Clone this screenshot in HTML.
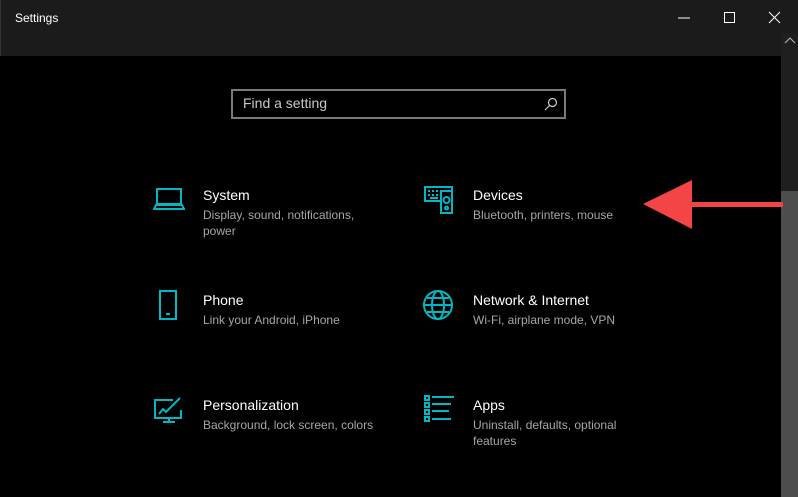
<!DOCTYPE html>
<html><head><style>
*{margin:0;padding:0;box-sizing:border-box}
body{width:798px;height:497px;background:#000;font-family:"Segoe UI","Liberation Sans",sans-serif;overflow:hidden;position:relative;color:#fff}
.tb{position:absolute;left:0;top:0;width:798px;height:56px;background:#1b1b1b;border-left:1px solid #333}
.tt{position:absolute;left:14px;top:11px;font-size:12px;color:#fff}
.sb{position:absolute;left:781px;top:33px;width:17px;height:464px;background:#1f1f1f}
.th{position:absolute;left:781px;top:191px;width:17px;height:306px;background:#4d4d4d}
.search{position:absolute;left:231px;top:89px;width:335px;height:30px;border:2px solid #7a7a7a}
.search span{position:absolute;left:10px;top:4px;font-size:14px;color:#c8c8c8}
.it{position:absolute}
.it .t{font-size:14px;color:#fff}
.it .s{font-size:12px;color:#a6a6a6;line-height:16px;margin-top:4px;width:190px}
svg.i{position:absolute}
</style></head><body>
<div class="tb"><div class="tt">Settings</div>
<svg style="position:absolute;left:670px;top:8px" width="120" height="20" stroke="#fff" stroke-width="1" fill="none">
<path d="M7 10h12"/><rect x="53.5" y="4.5" width="10" height="10"/><path d="M98 4l11 11M109 4L98 15"/></svg>
</div>
<div class="sb"></div><div class="th"></div>
<svg style="position:absolute;left:784px;top:37px" width="12" height="8" stroke="#bbb" fill="none"><path d="M1 6l5-5 5 5"/></svg>
<div class="search"><span>Find a setting</span>
<svg style="position:absolute;right:6px;top:6px" width="14" height="14" stroke="#ccc" fill="none" stroke-width="1.2"><circle cx="8.5" cy="5.5" r="4"/><path d="M5.5 8.5L1 13"/></svg></div>

<svg class="i" style="left:153px;top:186px" width="32" height="28" stroke="#00b7c3" stroke-width="2" fill="none"><rect x="4" y="3" width="24" height="15"/><path d="M1 23h30l-2-4H3z"/></svg>
<div class="it" style="left:203px;top:187px"><div class="t">System</div><div class="s" style="width:165px">Display, sound, notifications, power</div></div>

<svg class="i" style="left:423px;top:184px" width="32" height="32" stroke="#00b7c3" stroke-width="2" fill="none"><path d="M17 17H2V3h27v3"/><path d="M5 7h2M9 7h2M13 7h2M17 7h2M5 11h2M9 11h2M13 11h2M7 14h8" stroke-width="2"/><rect x="18" y="7" width="11" height="22"/><circle cx="23.5" cy="16" r="3"/><circle cx="23.5" cy="24" r="1.5"/></svg>
<div class="it" style="left:473px;top:187px"><div class="t">Devices</div><div class="s">Bluetooth, printers, mouse</div></div>

<svg class="i" style="left:158px;top:290px" width="22" height="32" stroke="#00b7c3" stroke-width="2" fill="none"><rect x="2" y="1" width="16" height="28"/><path d="M8 24h4"/></svg>
<div class="it" style="left:203px;top:292px"><div class="t">Phone</div><div class="s">Link your Android, iPhone</div></div>

<svg class="i" style="left:423px;top:290px" width="32" height="32" stroke="#00b7c3" stroke-width="2" fill="none"><circle cx="15" cy="15" r="14"/><ellipse cx="15" cy="15" rx="6" ry="14"/><path d="M1 15h28M4 8h22M4 22h22"/></svg>
<div class="it" style="left:473px;top:292px"><div class="t">Network &amp; Internet</div><div class="s">Wi-Fi, airplane mode, VPN</div></div>

<svg class="i" style="left:153px;top:396px" width="32" height="30" stroke="#00b7c3" stroke-width="2" fill="none"><path d="M20 4H2v18h26v-8"/><path d="M6 18l4-5 3 3 14-14"/><path d="M10 26h12M16 22v4"/></svg>
<div class="it" style="left:203px;top:397px"><div class="t">Personalization</div><div class="s">Background, lock screen, colors</div></div>

<svg class="i" style="left:423px;top:394px" width="32" height="30" stroke="#00b7c3" stroke-width="2" fill="none"><rect x="2" y="2" width="4" height="4"/><rect x="2" y="9" width="4" height="4"/><rect x="2" y="16" width="4" height="4"/><rect x="2" y="23" width="4" height="4"/><path d="M9 3h22M9 10h19M9 17h17M9 25h19"/></svg>
<div class="it" style="left:473px;top:397px"><div class="t">Apps</div><div class="s" style="width:160px">Uninstall, defaults, optional features</div></div>

<svg style="position:absolute;left:640px;top:178px" width="145" height="54"><polygon points="3,26 52,2 52,51" fill="#f44546"/><rect x="50" y="24" width="93" height="5" fill="#f44546"/></svg>
</body></html>
